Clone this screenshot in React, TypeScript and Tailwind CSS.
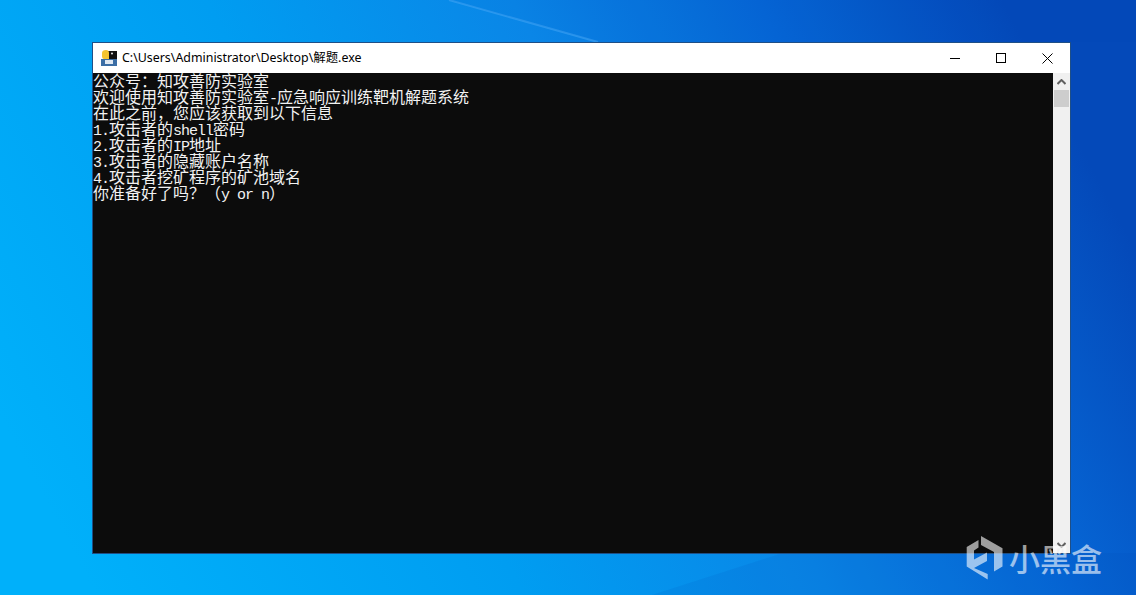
const cjk = '"Noto Sans CJK SC", "Liberation Sans", sans-serif';

function L({ children }: { children: string }) {
  return <span className="font-['Liberation_Mono',monospace] text-[15px] tracking-[-1px]">{children}</span>;
}

const lines: React.ReactNode[] = [
  "公众号：知攻善防实验室",
  <>欢迎使用知攻善防实验室<L>-</L>应急响应训练靶机解题系统</>,
  "在此之前，您应该获取到以下信息",
  <><L>1.</L>攻击者的<L>shell</L>密码</>,
  <><L>2.</L>攻击者的<L>IP</L>地址</>,
  <><L>3.</L>攻击者的隐藏账户名称</>,
  <><L>4.</L>攻击者挖矿程序的矿池域名</>,
  <>你准备好了吗？（<L>y or n</L>）</>,
];

function Wallpaper() {
  return (
    <svg className="absolute inset-0 w-full h-full" viewBox="0 0 1136 595" preserveAspectRatio="none">
      <defs>
        <linearGradient id="bg" x1="0" y1="0.7" x2="1" y2="0.42">
          <stop offset="0" stopColor="#00b0fa" />
          <stop offset="0.35" stopColor="#009df1" />
          <stop offset="0.6" stopColor="#0a86e7" />
          <stop offset="0.8" stopColor="#0667d6" />
          <stop offset="1" stopColor="#0449b9" />
        </linearGradient>
      </defs>
      <rect width="1136" height="595" fill="url(#bg)" />
      <path d="M449 0 L598 42" stroke="#45a8f6" strokeWidth="2" opacity="0.55" fill="none" />
      <polygon points="449,0 1136,0 1136,42 598,42" fill="#0040b0" opacity="0.05" />
      <polygon points="652,595 783,553 1136,553 1136,595" fill="#0040b0" opacity="0.1" />
    </svg>
  );
}

function TermIcon() {
  return (
    <svg width="16" height="16" viewBox="0 0 16 16" className="shrink-0">
      <rect x="3" y="1" width="13" height="10" fill="#111" />
      <path d="M1 3 Q1 0 5 0 Q8 0 8 3 L8 9 L3 9 Q1 9 1 6Z" fill="#f4c430" />
      <circle cx="11" cy="3.5" r="1" fill="#eee" />
      <rect x="0" y="9" width="16" height="7" fill="#3b6ea5" />
      <rect x="4" y="10" width="8" height="4" fill="#dfe8f2" />
    </svg>
  );
}

export default function App() {
  return (
    <div className="relative w-[1136px] h-[595px] overflow-hidden">
      <Wallpaper />
      <div className="relative flex flex-col pt-[42px] pl-[92px]">
        <div className="w-[979px] h-[512px] flex flex-col border border-[#1f4f86] bg-white">
          <div className="h-[30px] shrink-0 flex items-center pl-[8px] bg-white">
            <TermIcon />
            <span className="ml-[5px] text-[12.4px] text-black font-['Noto_Sans','Noto_Sans_CJK_SC',sans-serif]">
              C:\Users\Administrator\Desktop\解题.exe
            </span>
            <div className="ml-auto flex h-full items-center">
              <div className="w-[46px] flex justify-center">
                <div className="w-[10px] h-px bg-black" />
              </div>
              <div className="w-[46px] flex justify-center">
                <div className="w-[10px] h-[10px] border border-black" />
              </div>
              <div className="w-[46px] flex justify-center">
                <svg width="11" height="11" viewBox="0 0 11 11">
                  <path d="M0.5 0.5 L10.5 10.5 M10.5 0.5 L0.5 10.5" stroke="#000" strokeWidth="1" fill="none" />
                </svg>
              </div>
            </div>
          </div>
          <div className="flex-1 flex min-h-0">
            <div className="flex-1 bg-[#0c0c0c] text-[#f2f2f2] text-[16px] leading-[16px] overflow-hidden" style={{ fontFamily: cjk }}>
              <div className="-mt-px">
                {lines.map((l, i) => (
                  <div key={i} className="h-[16px] whitespace-nowrap">{l}</div>
                ))}
              </div>
            </div>
            <div className="w-[17px] shrink-0 bg-[#f0f0f0] flex flex-col items-center">
              <div className="h-[17px] flex items-center justify-center">
                <svg width="9" height="6" viewBox="0 0 9 6"><path d="M0.5 5 L4.5 1 L8.5 5" stroke="#606060" strokeWidth="2" fill="none" /></svg>
              </div>
              <div className="w-[15px] h-[17px] bg-[#cdcdcd]" />
              <div className="flex-1" />
              <div className="h-[17px] flex items-center justify-center">
                <svg width="9" height="6" viewBox="0 0 9 6"><path d="M0.5 1 L4.5 5 L8.5 1" stroke="#606060" strokeWidth="2" fill="none" /></svg>
              </div>
            </div>
          </div>
        </div>
      </div>
      <div className="absolute left-[966px] top-[536px] flex items-center gap-[6px] opacity-60">
        <svg width="37" height="44" viewBox="0 0 37 44">
          <path d="M15 0 L36.5 12.3 V30.6 L28 35.6 V16 L21 12.3 L15 9 Z" fill="#fff" />
          <path d="M0.7 11 L12.5 4 V11.5 L8 14.5 V23.5 L21 16.5 V25 L8 32 L21.7 38 V43.5 L0.7 30.6 Z" fill="#fff" />
        </svg>
        <span className="text-[31px] leading-[34px] font-medium text-white" style={{ fontFamily: cjk }}>小黑盒</span>
      </div>
    </div>
  );
}
